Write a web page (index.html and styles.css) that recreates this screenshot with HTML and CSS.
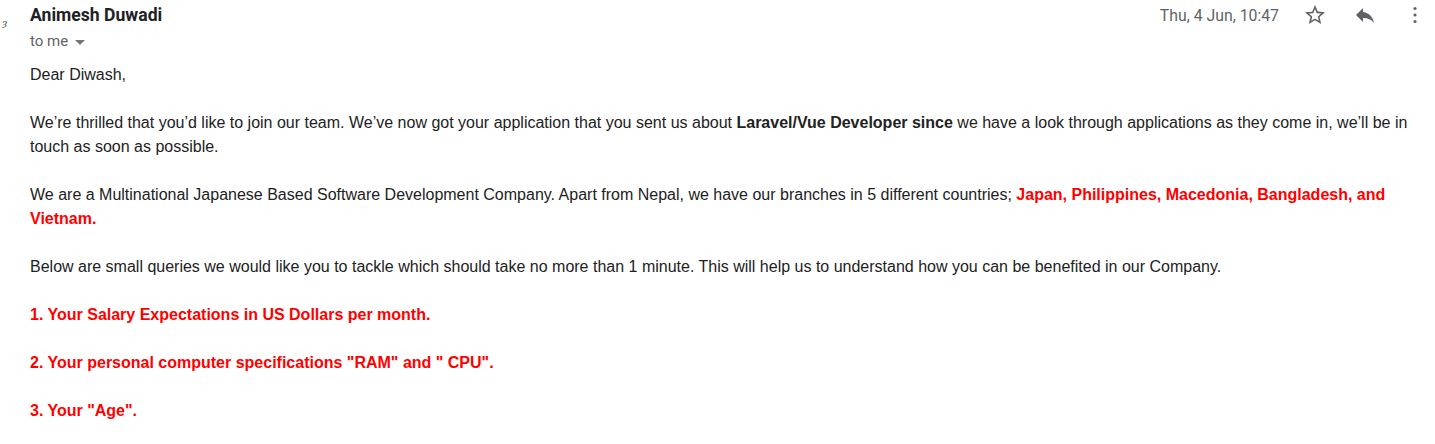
FILE: index.html
```html
<!DOCTYPE html>
<html>
<head>
<meta charset="utf-8">
<link rel="stylesheet" href="styles.css">
</head>
<body>
<div class="mail">
  <div class="gutter"><span class="mark">ȝ</span></div>
  <div class="main">
    <div class="head">
      <div class="who">
        <div class="name">Animesh Duwadi</div>
        <div class="to">to me <span class="caret"></span></div>
      </div>
      <div class="meta">
        <span class="date">Thu, 4 Jun, 10:47</span>
        <span class="ico star"><svg width="24" height="24" viewBox="0 0 24 24"><path fill="#5f6368" d="M22 9.24l-7.19-.62L12 2 9.19 8.63 2 9.24l5.46 4.73L5.82 21 12 17.27 18.18 21l-1.63-7.03L22 9.240zM12 15.4l-3.76 2.270 1-4.28-3.32-2.88 4.38-.38L12 6.1l1.71 4.04 4.38.38-3.32 2.88 1 4.28L12 15.4z"/></svg></span>
        <span class="ico reply"><svg width="24" height="24" viewBox="0 0 24 24"><path fill="#5f6368" d="M10 9V5l-7 7 7 7v-4.1c5 0 8.5 1.6 11 5.1-1-5-4-10-11-11z"/></svg></span>
        <span class="ico more"><svg width="24" height="24" viewBox="0 0 24 24"><circle cx="12" cy="5.5" r="1.6" fill="#5f6368"/><circle cx="12" cy="12" r="1.6" fill="#5f6368"/><circle cx="12" cy="18.5" r="1.6" fill="#5f6368"/></svg></span>
      </div>
    </div>
    <div class="body">
      <p>Dear Diwash,</p>
      <p>We’re thrilled that you’d like to join our team. We’ve now got your application that you sent us about <b>Laravel/Vue Developer since</b> we have a look through applications as they come in, we’ll be in touch as soon as possible.</p>
      <p>We are a Multinational Japanese Based Software Development Company. Apart from Nepal, we have our branches in 5 different countries; <b class="red">Japan, Philippines, Macedonia, Bangladesh, and Vietnam.</b></p>
      <p>Below are small queries we would like you to tackle which should take no more than 1 minute. This will help us to understand how you can be benefited in our Company.</p>
      <p class="red b">1. Your Salary Expectations in US Dollars per month.</p>
      <p class="red b">2. Your personal computer specifications "RAM" and " CPU".</p>
      <p class="red b">3. Your "Age".</p>
    </div>
  </div>
</div>
</body>
</html>
```
FILE: styles.css
```css
html, body { margin: 0; padding: 0; background: #fff; }
body { width: 1435px; height: 444px; overflow: hidden; }
.mail { display: flex; }
.gutter { width: 30px; flex: none; position: relative; }
.mark { position: absolute; left: 2px; top: 17px; font-family: "DejaVu Serif", serif; font-style: italic; font-size: 10px; color: #555; }
.main { flex: 1; padding-right: 8px; }
.head { display: flex; justify-content: space-between; align-items: flex-start; }
.who { padding-top: 3px; }
.name { font-family: Roboto, "Liberation Sans", sans-serif; font-weight: 700; font-size: 17.6px; line-height: 24px; color: #202124; }
.to { font-family: Roboto, "Liberation Sans", sans-serif; font-size: 15px; line-height: 20px; color: #5f6368; margin-top: 4px; display: flex; align-items: center; }
.caret { display: inline-block; width: 0; height: 0; border-left: 5px solid transparent; border-right: 5px solid transparent; border-top: 5px solid #777; margin-left: 7px; margin-top: 2px; }
.meta { display: flex; align-items: center; padding-top: 3px; }
.date { font-family: Roboto, "Liberation Sans", sans-serif; font-size: 15.8px; color: #5f6368; margin-right: 24px; }
.ico { display: flex; width: 24px; height: 24px; }
.star { margin-right: 26px; }
.reply { margin-right: 26px; }
.body { font-family: "Liberation Sans", Arial, sans-serif; font-size: 16px; line-height: 24px; color: #222; margin-top: 12px; }
.body p { margin: 0 0 24px 0; }
.body b { font-weight: 700; }
.red { color: #ff0000; }
.b { font-weight: 700; }
```
